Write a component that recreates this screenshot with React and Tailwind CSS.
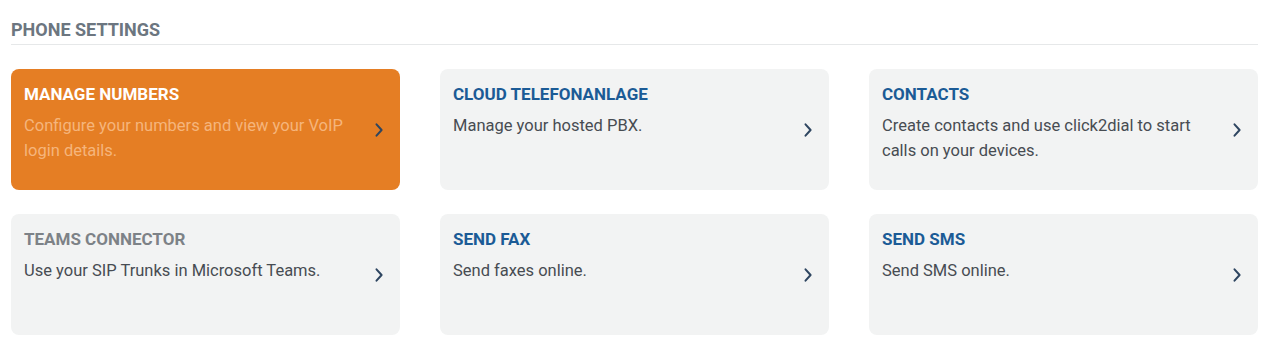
import React from 'react';

const cards = [
  {
    title: 'MANAGE NUMBERS',
    text: 'Configure your numbers and view your VoIP login details.',
    variant: 'active',
  },
  {
    title: 'CLOUD TELEFONANLAGE',
    text: 'Manage your hosted PBX.',
    variant: 'link',
  },
  {
    title: 'CONTACTS',
    text: 'Create contacts and use click2dial to start calls on your devices.',
    variant: 'link',
  },
  {
    title: 'TEAMS CONNECTOR',
    text: 'Use your SIP Trunks in Microsoft Teams.',
    variant: 'muted',
  },
  {
    title: 'SEND FAX',
    text: 'Send faxes online.',
    variant: 'link',
  },
  {
    title: 'SEND SMS',
    text: 'Send SMS online.',
    variant: 'link',
  },
];

const styles = {
  active: {
    box: 'bg-[#e57e24]',
    title: 'text-white',
    text: 'text-[#f5b57c]',
  },
  link: {
    box: 'bg-[#f2f3f3]',
    title: 'text-[#1b5b96]',
    text: 'text-[#474c52]',
  },
  muted: {
    box: 'bg-[#f2f3f3]',
    title: 'text-[#7d8287]',
    text: 'text-[#474c52]',
  },
};

const Chevron = () => (
  <svg className="w-[10px] h-[16px] shrink-0 text-[#2e4560]" viewBox="0 0 10 16" fill="none" stroke="currentColor">
    <path d="M2.5 2.3L7.6 8L2.5 13.7" strokeWidth={2} strokeLinecap="round" strokeLinejoin="round" />
  </svg>
);

const SettingCard = ({ title, text, variant }) => {
  const s = styles[variant];
  return (
    <a href="#" className={`flex items-center justify-between h-[121px] rounded-lg pl-[13px] pr-[16px] ${s.box}`}>
      <div className="self-start pt-[13px] w-[344px]">
        <h3 className={`text-[17px] leading-[25px] font-bold ${s.title}`}>{title}</h3>
        <p className={`mt-[6px] text-[16.5px] leading-[25px] ${s.text}`}>{text}</p>
      </div>
      <Chevron />
    </a>
  );
};

export default function App() {
  return (
    <div className="bg-white min-h-[356px] px-[11px] pt-[18px] font-['Roboto',sans-serif]">
      <h2 className="text-[18px] leading-[24px] font-bold text-[#6c7680] pb-[2px] border-b border-[#e6e8e9] w-[1247px]">
        PHONE SETTINGS
      </h2>
      <div className="grid grid-cols-3 gap-x-[40px] gap-y-[24px] mt-[24px] w-[1247px]">
        {cards.map((c) => (
          <SettingCard key={c.title} {...c} />
        ))}
      </div>
    </div>
  );
}
